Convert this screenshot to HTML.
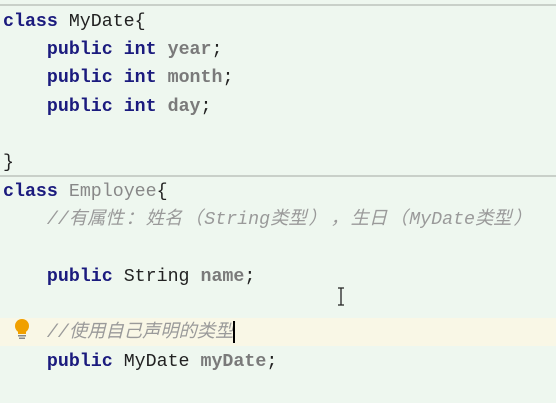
<!DOCTYPE html>
<html><head><meta charset="utf-8"><style>
html,body{margin:0;padding:0}
body{width:556px;height:403px;background:#eef7ef;position:relative;overflow:hidden;font-family:"Liberation Mono","Noto Sans CJK SC",monospace;font-size:18.3px;color:#222}
.l{position:absolute;left:3px;white-space:pre;line-height:28px;height:28px}
.k{color:#1b1b7e;font-weight:bold}
.f{color:#7a7a7a;font-weight:bold}
.c{color:#9a9a9a;font-style:italic}
.p{display:inline-block;width:22px;text-align:center}
.sep{position:absolute;left:0;width:556px;height:2px;background:#c9d0c9}
.hl{position:absolute;left:0;top:318px;width:556px;height:28px;background:#f9f7e6}
</style></head><body>
<div class="sep" style="top:4px"></div>
<div class="sep" style="top:175px"></div>
<div class="hl"></div>
<div class="l" style="top:8px"><span class="k">class</span> MyDate{</div>
<div class="l" style="top:36px">    <span class="k">public</span> <span class="k">int</span> <span class="f">year</span>;</div>
<div class="l" style="top:64px">    <span class="k">public</span> <span class="k">int</span> <span class="f">month</span>;</div>
<div class="l" style="top:93px">    <span class="k">public</span> <span class="k">int</span> <span class="f">day</span>;</div>
<div class="l" style="top:149px">}</div>
<div class="l" style="top:178px"><span class="k">class</span> <span style="color:#888">Employee</span>{</div>
<div class="l" style="top:206px">    <span class="c">//有属性<span class="p">：</span>姓名<span class="p">（</span>String类型<span class="p">）</span><span class="p">，</span>生日<span class="p">（</span>MyDate类型<span class="p">）</span></span></div>
<div class="l" style="top:263px">    <span class="k">public</span> String <span class="f">name</span>;</div>
<div class="l" style="top:319px">    <span class="c">//使用自己声明的类型</span><span style="display:inline-block;width:2px;height:22px;background:#000;vertical-align:middle"></span></div>
<div class="l" style="top:348px">    <span class="k">public</span> MyDate <span class="f">myDate</span>;</div>
<svg style="position:absolute;left:12px;top:318px" width="20" height="24" viewBox="0 0 20 24">
<circle cx="10" cy="8" r="7" fill="#f0a000"/><rect x="6" y="13" width="8" height="3" fill="#f0a000"/>
<rect x="6" y="17" width="8" height="1.5" fill="#888"/><rect x="7" y="19.5" width="6" height="1.5" fill="#888"/></svg>
<svg style="position:absolute;left:335px;top:287px" width="12" height="20" viewBox="0 0 12 20">
<path d="M3 1h6M6 1v17M3 18h6" stroke="#222" stroke-width="1.3" fill="none"/></svg>
</body></html>
